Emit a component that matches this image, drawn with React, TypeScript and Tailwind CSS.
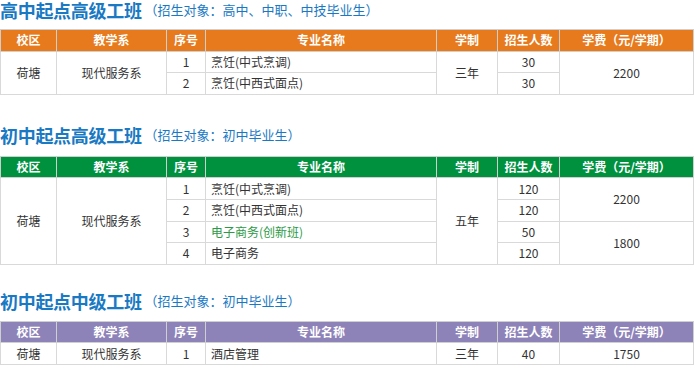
import React from "react";

type Row = { seq: string; name: string; green?: boolean };

const font = { fontFamily: '"Noto Sans CJK SC", "Noto Sans", sans-serif' };

function Header({ bg }: { bg: string }) {
  const cols = ["校区", "教学系", "序号", "专业名称", "学制", "招生人数", "学费（元/学期）"];
  return (
    <thead>
      <tr className={`${bg} text-white font-bold text-[12px]`}>
        {cols.map((c) => (
          <th key={c} className="h-[21.6px] border border-[#cfcfcf] p-0 text-center font-bold leading-[16px]">
            {c}
          </th>
        ))}
      </tr>
    </thead>
  );
}

function Colgroup() {
  return (
    <colgroup>
      <col className="w-[56px]" />
      <col className="w-[110px]" />
      <col className="w-[39px]" />
      <col className="w-[231px]" />
      <col className="w-[61px]" />
      <col className="w-[62px]" />
      <col className="w-[134px]" />
    </colgroup>
  );
}

const td = "h-[21.6px] border border-[#d9d9d9] p-0 text-center leading-[16px]";
const tdl = "h-[21.6px] border border-[#d9d9d9] p-0 pl-[5px] text-left leading-[16px]";

function Title({ main, sub }: { main: string; sub: string }) {
  return (
    <div className="h-[20px] flex items-center text-[#1a79c3] whitespace-nowrap">
      <span className="text-[18px] font-bold leading-[20px] tracking-[-0.3px]">{main}</span>
      <span className="text-[13px] leading-[20px] ml-[3px]">{sub}</span>
    </div>
  );
}

export default function App() {
  const t1: Row[] = [
    { seq: "1", name: "烹饪(中式烹调)" },
    { seq: "2", name: "烹饪(中西式面点)" },
  ];
  const t2: Row[] = [
    { seq: "1", name: "烹饪(中式烹调)" },
    { seq: "2", name: "烹饪(中西式面点)" },
    { seq: "3", name: "电子商务(创新班)", green: true },
    { seq: "4", name: "电子商务" },
  ];
  return (
    <div className="w-[694px] h-[366px] bg-white overflow-hidden text-[#333]" style={font}>
      <Title main="高中起点高级工班" sub="（招生对象：高中、中职、中技毕业生）" />
      <table className="mt-[9px] w-[693px] border-collapse table-fixed text-[12px]">
        <Colgroup />
        <Header bg="bg-[#e67a1c]" />
        <tbody>
          {t1.map((r, i) => (
            <tr key={r.seq}>
              {i === 0 && (
                <>
                  <td rowSpan={2} className={td}>荷塘</td>
                  <td rowSpan={2} className={td}>现代服务系</td>
                </>
              )}
              <td className={td}>{r.seq}</td>
              <td className={tdl}>{r.name}</td>
              {i === 0 && <td rowSpan={2} className={td}>三年</td>}
              <td className={td}>30</td>
              {i === 0 && <td rowSpan={2} className={td}>2200</td>}
            </tr>
          ))}
        </tbody>
      </table>

      <div className="mt-[30px]">
        <Title main="初中起点高级工班" sub="（招生对象：初中毕业生）" />
      </div>
      <table className="mt-[11px] w-[693px] border-collapse table-fixed text-[12px]">
        <Colgroup />
        <Header bg="bg-[#00913f]" />
        <tbody>
          {t2.map((r, i) => (
            <tr key={r.seq}>
              {i === 0 && (
                <>
                  <td rowSpan={4} className={td}>荷塘</td>
                  <td rowSpan={4} className={td}>现代服务系</td>
                </>
              )}
              <td className={td}>{r.seq}</td>
              <td className={`${tdl} ${r.green ? "text-[#2b9a46]" : ""}`}>{r.name}</td>
              {i === 0 && <td rowSpan={4} className={td}>五年</td>}
              <td className={td}>{r.seq === "3" ? "50" : "120"}</td>
              {i === 0 && <td rowSpan={2} className={td}>2200</td>}
              {i === 2 && <td rowSpan={2} className={td}>1800</td>}
            </tr>
          ))}
        </tbody>
      </table>

      <div className="mt-[26px]">
        <Title main="初中起点中级工班" sub="（招生对象：初中毕业生）" />
      </div>
      <table className="mt-[10px] w-[693px] border-collapse table-fixed text-[12px]">
        <Colgroup />
        <Header bg="bg-[#8e83b9]" />
        <tbody>
          <tr>
            <td className={td}>荷塘</td>
            <td className={td}>现代服务系</td>
            <td className={td}>1</td>
            <td className={tdl}>酒店管理</td>
            <td className={td}>三年</td>
            <td className={td}>40</td>
            <td className={td}>1750</td>
          </tr>
        </tbody>
      </table>
    </div>
  );
}
